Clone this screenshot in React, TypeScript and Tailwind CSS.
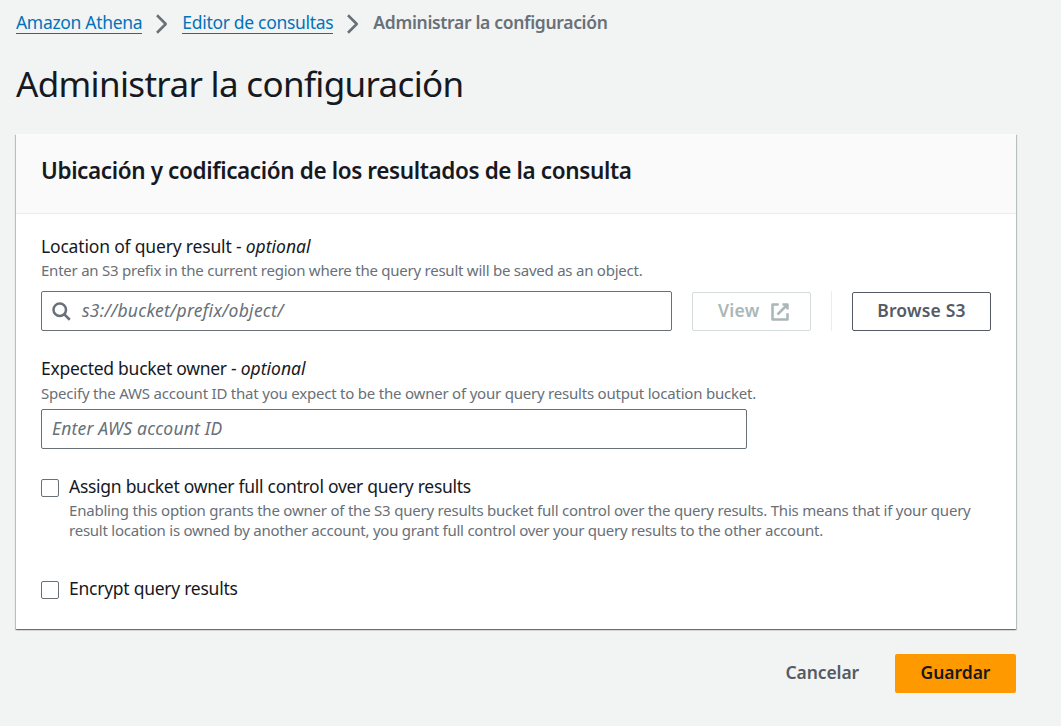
import type { ReactNode } from "react";

function Chevron() {
  return (
    <svg viewBox="0 0 16 16" className="mt-1.5 h-5 w-5 shrink-0" fill="none" stroke="#687078" strokeWidth="2" strokeLinejoin="round">
      <path d="m4 1 7 7-7 7" />
    </svg>
  );
}

function CrumbLink({ children }: { children: ReactNode }) {
  return (
    <a href="#" className="h-[26px] border-b border-[#0073bb] leading-[28px] tracking-[-0.31px] text-[#0073bb]">
      {children}
    </a>
  );
}

function Label({ text, className }: { text: string; className: string }) {
  return (
    <div className="h-6 leading-6">
      <span className={className}>{text} - </span>
      <i>optional</i>
    </div>
  );
}

function Checkbox() {
  return <span role="checkbox" aria-checked="false" className="mt-[5px] h-[18px] w-[18px] shrink-0 rounded-[2px] border border-[#687078] bg-white" />;
}

export default function App() {
  return (
    <div className="min-h-[726px] w-[1061px] overflow-hidden whitespace-nowrap bg-[#f2f3f3] pl-4 pr-[45px] pt-2 font-['Noto_Sans',sans-serif] text-[17.5px] text-[#16191f]">
      <nav className="flex h-7 items-start">
        <CrumbLink>Amazon Athena</CrumbLink>
        <span className="flex px-[10px]"><Chevron /></span>
        <CrumbLink>Editor de consultas</CrumbLink>
        <span className="flex px-[10px]"><Chevron /></span>
        <span className="font-semibold leading-[28px] tracking-[-0.32px] text-[#687078]">Administrar la configuración</span>
      </nav>
      <h1 className="mt-[26px] h-[72px] text-[35px] leading-[44px] tracking-[-0.67px]">Administrar la configuración</h1>

      <section className="h-[495px] w-[1000px] bg-white shadow-[0_1px_1px_0_rgba(0,28,36,0.4),1px_1px_1px_0_rgba(0,28,36,0.18),-1px_1px_1px_0_rgba(0,28,36,0.18)]">
        <header className="h-20 border-b border-[#eaeded] bg-[#fafafa] px-[25px] pt-[23px]">
          <h2 className="text-[22.5px] font-semibold leading-[28px] tracking-[-0.38px]">Ubicación y codificación de los resultados de la consulta</h2>
        </header>
        <div className="px-[25px] pt-5">
          <Label text="Location of query result" className="tracking-[-0.18px]" />
          <p className="mt-0.5 text-[15px] leading-5 tracking-[-0.24px] text-[#687078]">
            Enter an S3 prefix in the current region where the query result will be saved as an object.
          </p>
          <div className="mt-[11px] flex h-10">
            <div className="flex w-[631px] items-center rounded-[2px] border border-[#687078] pl-[9px] text-[#687078]">
              <svg viewBox="0 0 16 16" className="h-5 w-5" fill="none" stroke="#687078" strokeWidth="2">
                <circle cx="7" cy="7" r="5" />
                <path d="m15 15-4.5-4.5" />
              </svg>
              <i className="ml-[11px] pb-0.5 tracking-[0.26px]">s3://bucket/prefix/object/</i>
            </div>
            <button className="ml-5 mt-px flex h-[39px] w-[119px] items-center rounded-[2px] border border-[#d5dbdb] pl-[25px] font-semibold text-[#aab7b8]">
              <span className="w-[42px] pb-0.5 text-left tracking-[0.3px]">View</span>
              <svg viewBox="0 0 16 16" className="ml-[10px] h-5 w-5" fill="none" stroke="currentColor" strokeWidth="2" strokeLinejoin="round">
                <path d="M10 2h4v4M6 10l8-8M14 9.05V14H2V2h5" />
              </svg>
            </button>
            <span className="ml-5 w-px bg-[#eaeded]" />
            <button className="ml-5 mt-px h-[39px] w-[139px] rounded-[2px] border border-[#545b64] pb-0.5 text-center font-semibold tracking-[0.2px] text-[#545b64]">Browse S3</button>
          </div>

          <div className="mt-[25px]">
            <Label text="Expected bucket owner" className="tracking-[-0.27px]" />
          </div>
          <p className="mt-[3px] text-[15px] leading-5 tracking-[-0.21px] text-[#687078]">
            Specify the AWS account ID that you expect to be the owner of your query results output location bucket.
          </p>
          <div className="mt-1.5 flex h-10 w-[706px] items-center rounded-[2px] border border-[#687078] pl-[10px] text-[#687078]">
            <i className="pb-0.5 tracking-[0.18px]">Enter AWS account ID</i>
          </div>

          <div className="mt-[25px] flex">
            <Checkbox />
            <div className="ml-[10px]">
              <div className="leading-6 tracking-[-0.28px]">Assign bucket owner full control over query results</div>
              <p className="mt-0.5 text-[15px] leading-5 text-[#687078]">
                <span className="block tracking-[-0.215px]">Enabling this option grants the owner of the S3 query results bucket full control over the query results. This means that if your query</span>
                <span className="block tracking-[-0.24px]">result location is owned by another account, you grant full control over your query results to the other account.</span>
              </p>
            </div>
          </div>
          <div className="mt-9 flex">
            <Checkbox />
            <div className="ml-[10px] leading-6 tracking-[-0.26px]">Encrypt query results</div>
          </div>
        </div>
      </section>

      <footer className="mt-[25px] flex w-[1000px] justify-end">
        <button className="h-[39px] pb-0.5 pr-9 font-semibold tracking-[-0.12px] text-[#545b64]">Cancelar</button>
        <button className="h-[39px] w-[121px] rounded-[2px] bg-[#ff9900] pb-0.5 font-semibold tracking-[-0.05px] text-[#16191f]">Guardar</button>
      </footer>
    </div>
  );
}
